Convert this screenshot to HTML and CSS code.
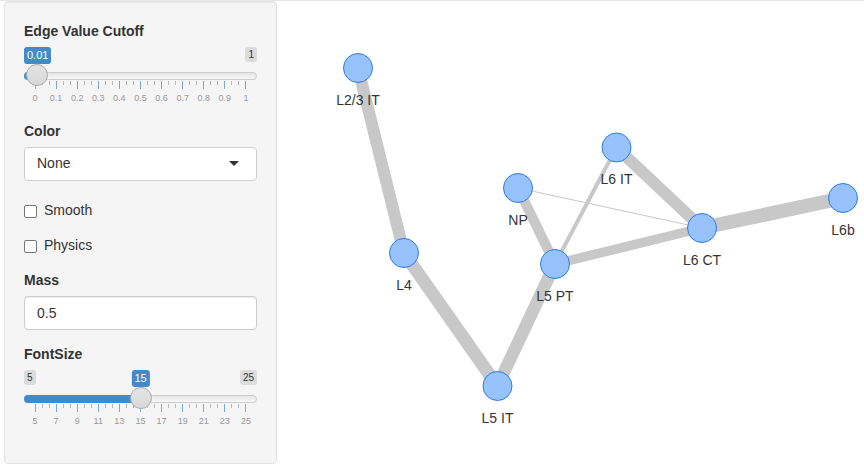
FILE: index.html
```html
<!DOCTYPE html>
<html>
<head>
<meta charset="utf-8">
<title>Network</title>
<link rel="stylesheet" href="styles.css">
</head>
<body>
<div class="page">
  <aside class="well">
    <div class="form-group">
      <label class="control-label">Edge Value Cutoff</label>
      <div class="irs">
        <div class="irs-line"></div>
        <div class="irs-bar" style="width:13px"></div>
        <span class="irs-max">1</span>
        <span class="irs-single">0.01</span>
        <span class="irs-handle" style="left:2px"></span>
        <div class="irs-grid">
          <div class="irs-ticks">
            <i class="big"></i><i></i><i></i><i class="big"></i><i></i><i></i><i class="big"></i><i></i><i></i><i class="big"></i><i></i><i></i><i class="big"></i><i></i><i></i><i class="big"></i><i></i><i></i><i class="big"></i><i></i><i></i><i class="big"></i><i></i><i></i><i class="big"></i><i></i><i></i><i class="big"></i><i></i><i></i><i class="big"></i>
          </div>
          <div class="irs-labels">
            <span>0</span><span>0.1</span><span>0.2</span><span>0.3</span><span>0.4</span><span>0.5</span><span>0.6</span><span>0.7</span><span>0.8</span><span>0.9</span><span>1</span>
          </div>
        </div>
      </div>
    </div>

    <div class="form-group select-group">
      <label class="control-label">Color</label>
      <div class="select-box">
        <span>None</span>
        <span class="caret"></span>
      </div>
    </div>

    <div class="form-group checkbox">
      <label><input type="checkbox"><span>Smooth</span></label>
    </div>
    <div class="form-group checkbox">
      <label><input type="checkbox"><span>Physics</span></label>
    </div>

    <div class="form-group">
      <label class="control-label">Mass</label>
      <input class="form-control" type="text" value="0.5">
    </div>

    <div class="form-group">
      <label class="control-label">FontSize</label>
      <div class="irs">
        <div class="irs-line"></div>
        <div class="irs-bar" style="width:116.5px"></div>
        <span class="irs-min">5</span>
        <span class="irs-max">25</span>
        <span class="irs-single centered" style="left:116.5px">15</span>
        <span class="irs-handle" style="left:105.5px"></span>
        <div class="irs-grid">
          <div class="irs-ticks">
            <i class="big"></i><i></i><i></i><i class="big"></i><i></i><i></i><i class="big"></i><i></i><i></i><i class="big"></i><i></i><i></i><i class="big"></i><i></i><i></i><i class="big"></i><i></i><i></i><i class="big"></i><i></i><i></i><i class="big"></i><i></i><i></i><i class="big"></i><i></i><i></i><i class="big"></i><i></i><i></i><i class="big"></i>
          </div>
          <div class="irs-labels">
            <span>5</span><span>7</span><span>9</span><span>11</span><span>13</span><span>15</span><span>17</span><span>19</span><span>21</span><span>23</span><span>25</span>
          </div>
        </div>
      </div>
    </div>
  </aside>

  <main class="main">
    <svg class="network" viewBox="277 1 587 467" width="587" height="467">
      <g class="edges">
        <line x1="358" y1="68" x2="404" y2="253" stroke-width="12"/>
        <line x1="404" y1="253" x2="497.5" y2="386" stroke-width="13"/>
        <line x1="497.5" y1="386" x2="555" y2="264" stroke-width="12.5"/>
        <line x1="518" y1="188" x2="555" y2="264" stroke-width="10"/>
        <line x1="555" y1="264" x2="616.5" y2="147.5" stroke-width="4"/>
        <line x1="616.5" y1="147.5" x2="702" y2="228" stroke-width="12"/>
        <line x1="518" y1="188" x2="702" y2="228" stroke-width="1"/>
        <line x1="555" y1="264" x2="702" y2="228" stroke-width="9.5"/>
        <line x1="702" y1="228" x2="843" y2="198" stroke-width="14"/>
      </g>
      <g class="nodes">
        <circle cx="358" cy="68" r="14.5"/>
        <circle cx="404" cy="253" r="14.5"/>
        <circle cx="497.5" cy="386" r="14.5"/>
        <circle cx="555" cy="264" r="14.5"/>
        <circle cx="518" cy="188" r="14.5"/>
        <circle cx="616.5" cy="147.5" r="14.5"/>
        <circle cx="702" cy="228" r="14.5"/>
        <circle cx="843" cy="198" r="14.5"/>
      </g>
      <g class="labels">
        <text x="358" y="105">L2/3 IT</text>
        <text x="404" y="290">L4</text>
        <text x="497.5" y="423">L5 IT</text>
        <text x="555" y="301">L5 PT</text>
        <text x="518" y="225">NP</text>
        <text x="616.5" y="184">L6 IT</text>
        <text x="702" y="265">L6 CT</text>
        <text x="843" y="235">L6b</text>
      </g>
    </svg>
  </main>
</div>
</body>
</html>
```

FILE: styles.css
```css
* { box-sizing: border-box; }

html, body {
  margin: 0;
  padding: 0;
}

body {
  width: 864px;
  height: 468px;
  overflow: hidden;
  font-family: "Liberation Sans", Arial, Helvetica, sans-serif;
  font-size: 14px;
  line-height: 1.42857;
  color: #333;
  background: #fff;
  border-top: 1px solid #e6e6e6;
}

.page {
  display: flex;
  align-items: flex-start;
}

.well {
  margin-left: 4px;
  width: 273px;
  flex: none;
  padding: 20px 19px 18px;
  background: #f5f5f5;
  border: 1px solid #e3e3e3;
  border-radius: 4px;
  box-shadow: inset 0 1px 1px rgba(0, 0, 0, 0.05);
}

.form-group {
  margin-bottom: 15px;
}

.select-group {
  margin-bottom: 20px;
}

.control-label {
  display: block;
  font-weight: bold;
  margin-bottom: 5px;
}

/* slider */
.irs {
  position: relative;
  height: 60px;
  padding: 34px 11px 0;
  font-size: 10px;
}

.irs-line {
  position: absolute;
  top: 25px;
  left: 0;
  right: 0;
  height: 8px;
  border: 1px solid #cccccc;
  border-radius: 8px;
  background: linear-gradient(to bottom, #dedede -50%, #ffffff 150%);
}

.irs-bar {
  position: absolute;
  top: 25px;
  left: 0;
  height: 8px;
  background: #428bca;
  border-radius: 8px 0 0 8px;
}

.irs-handle {
  position: absolute;
  top: 17px;
  width: 22px;
  height: 22px;
  border: 1px solid #ababab;
  border-radius: 50%;
  background: linear-gradient(to bottom, #e4e4e4, #d8d8d8);
  box-shadow: 1px 1px 3px rgba(255, 255, 255, 0.3);
}

.irs-min,
.irs-max {
  position: absolute;
  top: 0;
  padding: 1px 3px;
  font-size: 10px;
  line-height: 1.333;
  color: #333;
  background: rgba(0, 0, 0, 0.1);
  border-radius: 3px;
}

.irs-min { left: 0; }
.irs-max { right: 0; }

.irs-single {
  position: absolute;
  top: 0;
  left: 0;
  padding: 1px 3px;
  font-size: 11px;
  line-height: 1.333;
  color: #fff;
  background: #428bca;
  border-radius: 3px;
}

.irs-single.centered {
  transform: translateX(-50%);
}

.irs-grid {
  width: 211px;
}

.irs-ticks {
  display: grid;
  grid-template-columns: repeat(31, 7.0333px);
  margin-left: -3.5167px;
  justify-items: center;
  align-items: start;
  height: 8px;
}

.irs-ticks i {
  display: block;
  width: 1px;
  height: 4px;
  background: #b4b9be;
}

.irs-ticks i.big {
  height: 8px;
  background: #7aa7d6;
}

.irs-labels {
  display: grid;
  grid-template-columns: repeat(11, 21.1px);
  margin-left: -10.55px;
  margin-top: 4px;
  justify-items: center;
  font-size: 9px;
  line-height: 10px;
  color: #999;
}

/* select */
.select-box {
  display: flex;
  align-items: center;
  justify-content: space-between;
  height: 34px;
  padding: 0 12px;
  background: #fff;
  border: 1px solid #ccc;
  border-radius: 4px;
  color: #333;
}

.caret {
  width: 0;
  height: 0;
  margin-right: 5px;
  border-top: 5px solid #333;
  border-left: 5px solid transparent;
  border-right: 5px solid transparent;
}

/* checkbox */
.checkbox label {
  display: flex;
  align-items: center;
  height: 20px;
  gap: 7px;
  font-weight: normal;
}

.checkbox input {
  appearance: none;
  -webkit-appearance: none;
  margin: 1px 0 0;
  width: 13px;
  height: 13px;
  border: 1px solid #767676;
  border-radius: 2px;
  background: #fff;
}

/* text input */
.form-control {
  display: block;
  width: 100%;
  height: 34px;
  padding: 6px 12px;
  font-family: inherit;
  font-size: 14px;
  line-height: 1.42857;
  color: #333;
  background: #fff;
  border: 1px solid #ccc;
  border-radius: 4px;
  box-shadow: inset 0 1px 1px rgba(0, 0, 0, 0.075);
}

/* network */
.main {
  flex: 1;
}

.network {
  display: block;
}

.edges line {
  stroke: #c8c8c8;
}

.nodes circle {
  fill: #97c2fc;
  stroke: #2b7ce9;
  stroke-width: 1;
}

.labels text {
  font-family: "Liberation Sans", Arial, sans-serif;
  font-size: 14px;
  fill: #343434;
  text-anchor: middle;
}
```
